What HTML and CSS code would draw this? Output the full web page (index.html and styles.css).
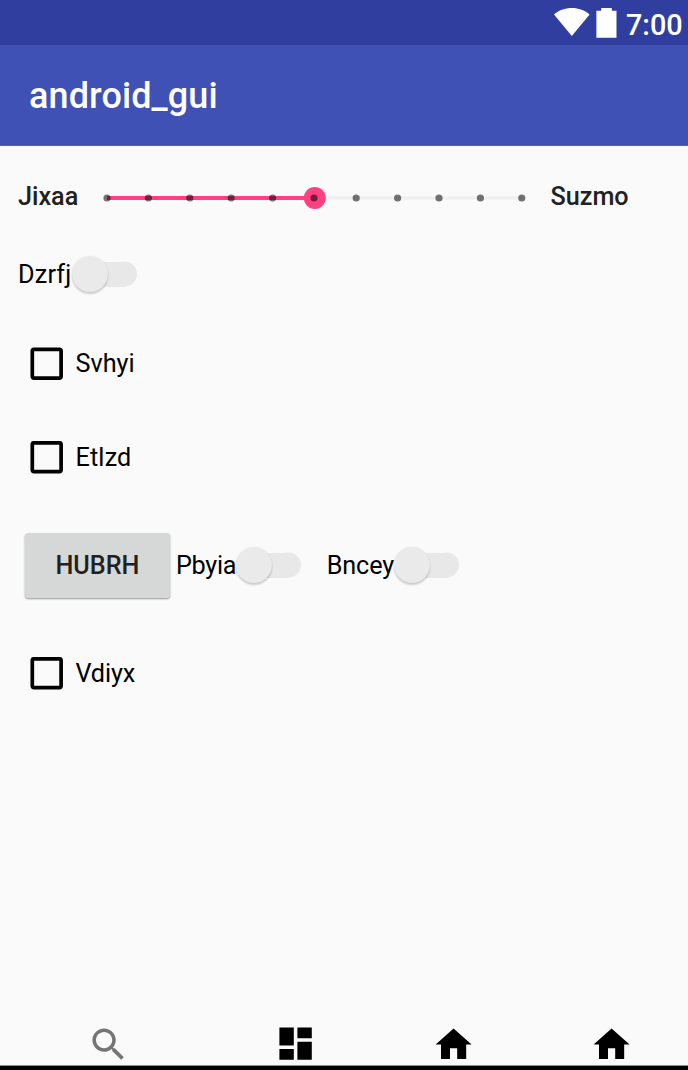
FILE: index.html
```
<!DOCTYPE html>
<html lang="en">
<head>
<meta charset="utf-8">
<title>android_gui</title>
<link rel="stylesheet" href="styles.css">
</head>
<body>
<div class="screen">
  <div class="status">
    <svg class="wifi" width="36" height="29" viewBox="0 0 36 29"><path fill="#fff" d="M0 6.4C4.6 2.4 11 0 17.8 0s13.2 2.4 17.8 6.4L17.8 28z"/></svg>
    <svg class="battery" width="21" height="30" viewBox="0 0 21 30"><path fill="#fff" d="M5.2 0h10.6v2.8h4.7v27H.4v-27h4.8z"/></svg>
    <span class="clock">7:00</span>
  </div>
  <header class="appbar"><h1 class="title">android_gui</h1></header>
  <main class="content">
    <div class="row slider-row">
      <span class="label strong slider-start">Jixaa</span>
      <svg class="slider" width="430" height="24" viewBox="0 0 430 24">
        <path d="M7 12h415" stroke="#f0f0f0" stroke-width="3.6"/>
        <path d="M7 12h207" stroke="#ff4081" stroke-width="3.8"/>
        <circle cx="214.8" cy="12" r="11" fill="#ff4081"/>
        <g fill="#000" fill-opacity=".54">
          <circle cx="7" cy="12" r="3.6"/><circle cx="48.4" cy="12" r="3.6"/><circle cx="89.8" cy="12" r="3.6"/><circle cx="131.2" cy="12" r="3.6"/><circle cx="172.6" cy="12" r="3.6"/><circle cx="214" cy="12" r="3.6"/><circle cx="256.2" cy="12" r="3.6"/><circle cx="297.6" cy="12" r="3.6"/><circle cx="339" cy="12" r="3.6"/><circle cx="380.4" cy="12" r="3.6"/><circle cx="421.8" cy="12" r="3.6"/>
        </g>
      </svg>
      <span class="label strong slider-end">Suzmo</span>
    </div>
    <div class="row switch-row">
      <span class="label first-switch-label">Dzrfj</span><span class="switch"><span class="thumb"></span></span>
    </div>
    <div class="row check-row"><svg class="checkbox" viewBox="0 0 34 34"><rect x="2.3" y="2.3" width="28.8" height="28.8" rx="1.8"/></svg><span class="label">Svhyi</span></div>
    <div class="row check-row"><svg class="checkbox" viewBox="0 0 34 34"><rect x="2.3" y="1.8" width="28.8" height="28.8" rx="1.8"/></svg><span class="label check-wide">Etlzd</span></div>
    <div class="row button-row">
      <button class="button" type="button">HUBRH</button>
      <span class="label second-switch-label">Pbyia</span><span class="switch"><span class="thumb"></span></span>
      <span class="label third-switch-label">Bncey</span><span class="switch"><span class="thumb"></span></span>
    </div>
    <div class="row check-row"><svg class="checkbox" viewBox="0 0 34 34"><rect x="2.3" y="1.8" width="28.8" height="28.8" rx="1.8"/></svg><span class="label check-narrow">Vdiyx</span></div>
  </main>
  <nav class="bottom">
    <svg class="icon search" viewBox="0 0 24 24"><path fill="#757575" d="M15.5 14h-.79l-.28-.27C15.41 12.59 16 11.11 16 9.5 16 5.91 13.09 3 9.5 3S3 5.91 3 9.5 5.91 16 9.5 16c1.61 0 3.09-.59 4.23-1.57l.27.28v.79l5 4.99L20.49 19l-4.99-5zm-6 0C7.01 14 5 11.99 5 9.5S7.01 5 9.5 5 14 7.01 14 9.5 11.99 14 9.5 14z"/></svg>
    <svg class="icon dashboard" viewBox="0 0 24 24"><path d="M3 13h8V3H3v10zm0 8h8v-6H3v6zm10 0h8V11h-8v10zm0-18v6h8V3h-8z"/></svg>
    <svg class="icon home" viewBox="0 0 24 24"><path d="M10 20v-6h4v6h5v-8h3L12 3 2 12h3v8z"/></svg>
    <svg class="icon home" viewBox="0 0 24 24"><path d="M10 20v-6h4v6h5v-8h3L12 3 2 12h3v8z"/></svg>
  </nav>
</div>
</body>
</html>
```
FILE: styles.css
```
* { box-sizing: border-box; }
body { margin: 0; font-family: Roboto, "Liberation Sans", sans-serif; }
.screen {
  display: flex;
  flex-direction: column;
  width: 688px;
  height: 1070px;
  overflow: hidden;
  background: #fafafa;
  color: #000;
}
.status {
  display: flex;
  align-items: flex-start;
  flex: none;
  height: 45px;
  padding: 8px 0 0 554px;
  background: #303f9f;
}
.wifi, .battery { flex: none; }
.battery { margin-left: 6px; }
.clock {
  margin-left: 9px;
  color: #fff;
  font-size: 28.8px;
  font-weight: 500;
  line-height: 34px;
}
.appbar {
  display: flex;
  align-items: center;
  flex: none;
  height: 101px;
  padding: 2px 0 0 29px;
  border-bottom: 1px solid #5262bb;
  background: #3f51b5;
}
.title { margin: 0; color: #fff; font-size: 36px; font-weight: 500; line-height: 42px; letter-spacing: .1px; }
.content { flex: 1; }
.row { display: flex; align-items: center; white-space: nowrap; }
.label { flex: none; font-size: 25.2px; line-height: 30px; }
.strong { padding-bottom: 2px; color: #212121; font-weight: 500; }
.slider-row { height: 103px; padding-left: 18px; }
.slider { flex: none; margin-top: 1px; }
.slider-start { width: 82px; }
.slider-end { margin-left: 20.5px; }
.switch-row { height: 51px; margin-bottom: 17px; padding-left: 18px; }
.first-switch-label { width: 53.7px; letter-spacing: .2px; }
.switch {
  display: flex;
  align-items: center;
  flex: none;
  width: 65px;
  height: 36px;
  margin-top: -1px;
  background: linear-gradient(#e8e8e8, #e8e8e8) 18px 50% / 35px 25px no-repeat,
    radial-gradient(circle at 52.5px 18px, #e8e8e8 12px, transparent 13px);
}
.thumb {
  width: 36px;
  height: 36px;
  border-radius: 50%;
  background: #eaeaea;
  box-shadow: 0 2px 2px rgba(0, 0, 0, .18), 0 0 2px rgba(0, 0, 0, .06);
}
.check-row { height: 94px; padding-left: 30px; }
.checkbox {
  flex: none;
  width: 34px;
  height: 34px;
  margin-right: 11.5px;
  fill: none;
  stroke: #000;
  stroke-width: 3.7px;
}
.check-wide { letter-spacing: .15px; }
.check-narrow { letter-spacing: -.15px; }
.button-row { height: 122px; padding: 0 0 1px 25px; }
.button {
  flex: none;
  width: 145px;
  height: 65px;
  margin-top: -1px;
  padding: 1px 0 0;
  border: 0;
  border-radius: 3.6px;
  background: #d6d7d7;
  box-shadow: 0 1px 2px rgba(0, 0, 0, .4);
  color: #212121;
  font: 500 25.2px/30px Roboto, sans-serif;
}
.second-switch-label { width: 59.7px; margin-left: 6px; letter-spacing: -.3px; }
.third-switch-label { width: 67.6px; margin-left: 26px; letter-spacing: -.1px; }
.bottom {
  display: flex;
  flex: none;
  height: 48px;
  padding-left: 87px;
  border-bottom: 4px solid #000;
  box-shadow: inset 0 -1px #8c8c8c;
}
.icon { flex: none; width: 43.2px; height: 43.2px; }
.search, .home { margin-top: 1px; }
.dashboard { margin-left: 143.4px; }
.home { margin-left: 115px; }
```
